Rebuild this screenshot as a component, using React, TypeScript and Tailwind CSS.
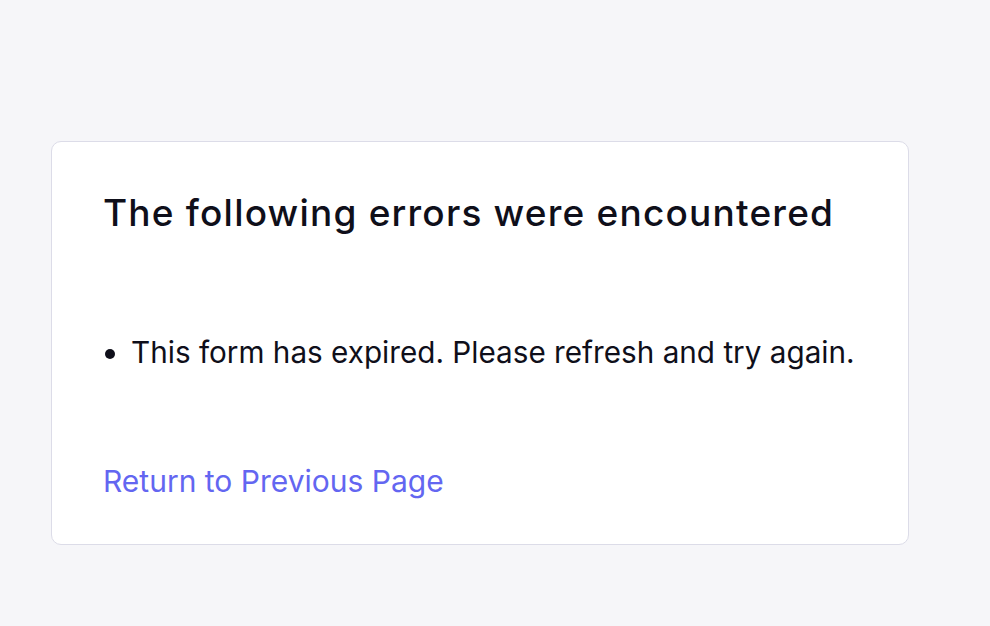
export default function App() {
  return (
    <div className="min-h-screen bg-[#f6f6f9] font-['Inter',sans-serif] pt-[141px] pl-[51px] pr-[81px]">
      <div className="w-[858px] h-[404px] bg-white border border-[#dcdce8] rounded-[10px] px-[51px] pt-[49px]">
        <h1 className="text-[37px] leading-[44px] font-medium text-[#0f0f1a] tracking-[1.2px]">
          The following errors were encountered
        </h1>

        {/* Errors */}
        <ul className="mt-[99px] list-disc pl-[28px] text-[29.7px] leading-[36px] text-[#0f0f1a] whitespace-nowrap">
          <li>This form has expired. Please refresh and try again.</li>
        </ul>

        <a href="#" className="block mt-[93px] text-[30px] leading-[36px] text-[#6366f1]">
          Return to Previous Page
        </a>
      </div>
    </div>
  );
}
